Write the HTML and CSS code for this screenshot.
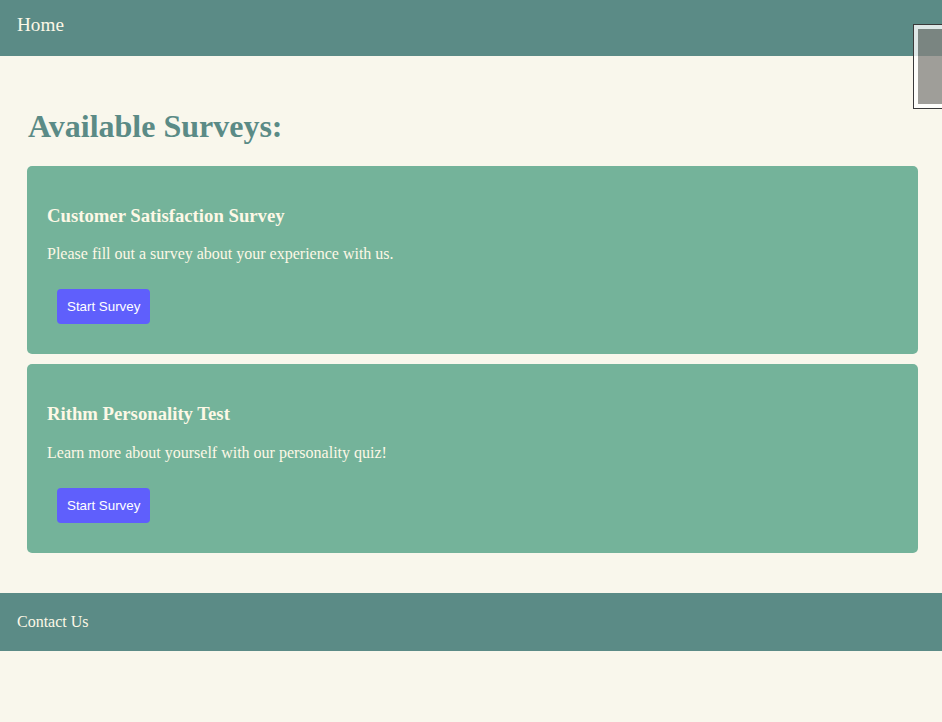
FILE: index.html
```html
<!DOCTYPE html>
<html>
<head>
<meta charset="utf-8">
<link rel="stylesheet" href="styles.css">
</head>
<body>
<header class="site-header"><a class="home-link" href="#">Home</a></header>
<main class="content">
  <h1 class="page-title">Available Surveys:</h1>
  <section class="survey-card">
    <h3 class="survey-title">Customer Satisfaction Survey</h3>
    <p class="survey-desc">Please fill out a survey about your experience with us.</p>
    <button class="start-btn">Start Survey</button>
  </section>
  <section class="survey-card">
    <h3 class="survey-title">Rithm Personality Test</h3>
    <p class="survey-desc">Learn more about yourself with our personality quiz!</p>
    <button class="start-btn">Start Survey</button>
  </section>
</main>
<footer class="site-footer">Contact Us</footer>
<div class="overlay-box"><div class="overlay-inner"></div></div>
</body>
</html>
```
FILE: styles.css
```css
body {
  margin: 0;
  background: #f9f7ec;
  font-family: "Liberation Serif", "Times New Roman", serif;
  color: #fdf8e6;
}
.site-header {
  background: #5b8b86;
  padding: 14px 17px 20px;
  height: 22px;
}
.home-link {
  color: #fdf8e6;
  text-decoration: none;
  font-size: 19.2px;
  line-height: 22px;
}
.content {
  padding: 30px 24px 30px 27px;
}
.page-title {
  color: #5b8b86;
  font-size: 32px;
  margin: 21.5px 0 21px 1px;
}
.survey-card {
  background: #74b39a;
  border-radius: 5px;
  padding: 20px;
  margin-bottom: 10px;
}
.survey-title {
  font-size: 18.72px;
  margin: 19.1px 0 18.72px;
}
.survey-desc {
  font-size: 16px;
  margin: 16px 0;
}
.start-btn {
  font-family: "Liberation Sans", Arial, sans-serif;
  font-size: 13.33px;
  background: #5f5ffc;
  color: #ffffff;
  border: none;
  border-radius: 4px;
  padding: 10px;
  margin: 10px;
}
.site-footer {
  background: #5b8b86;
  padding: 20px 17px;
  font-size: 16px;
  line-height: 18px;
}
.overlay-box {
  position: absolute;
  left: 913px;
  top: 24px;
  width: 40px;
  height: 83px;
  border: 1px solid #3a3a3a;
}
.overlay-inner {
  height: 75px;
  border: 4px solid rgba(255, 255, 255, 0.8);
  background: rgba(131, 131, 128, 0.77);
  background-clip: padding-box;
}
```
